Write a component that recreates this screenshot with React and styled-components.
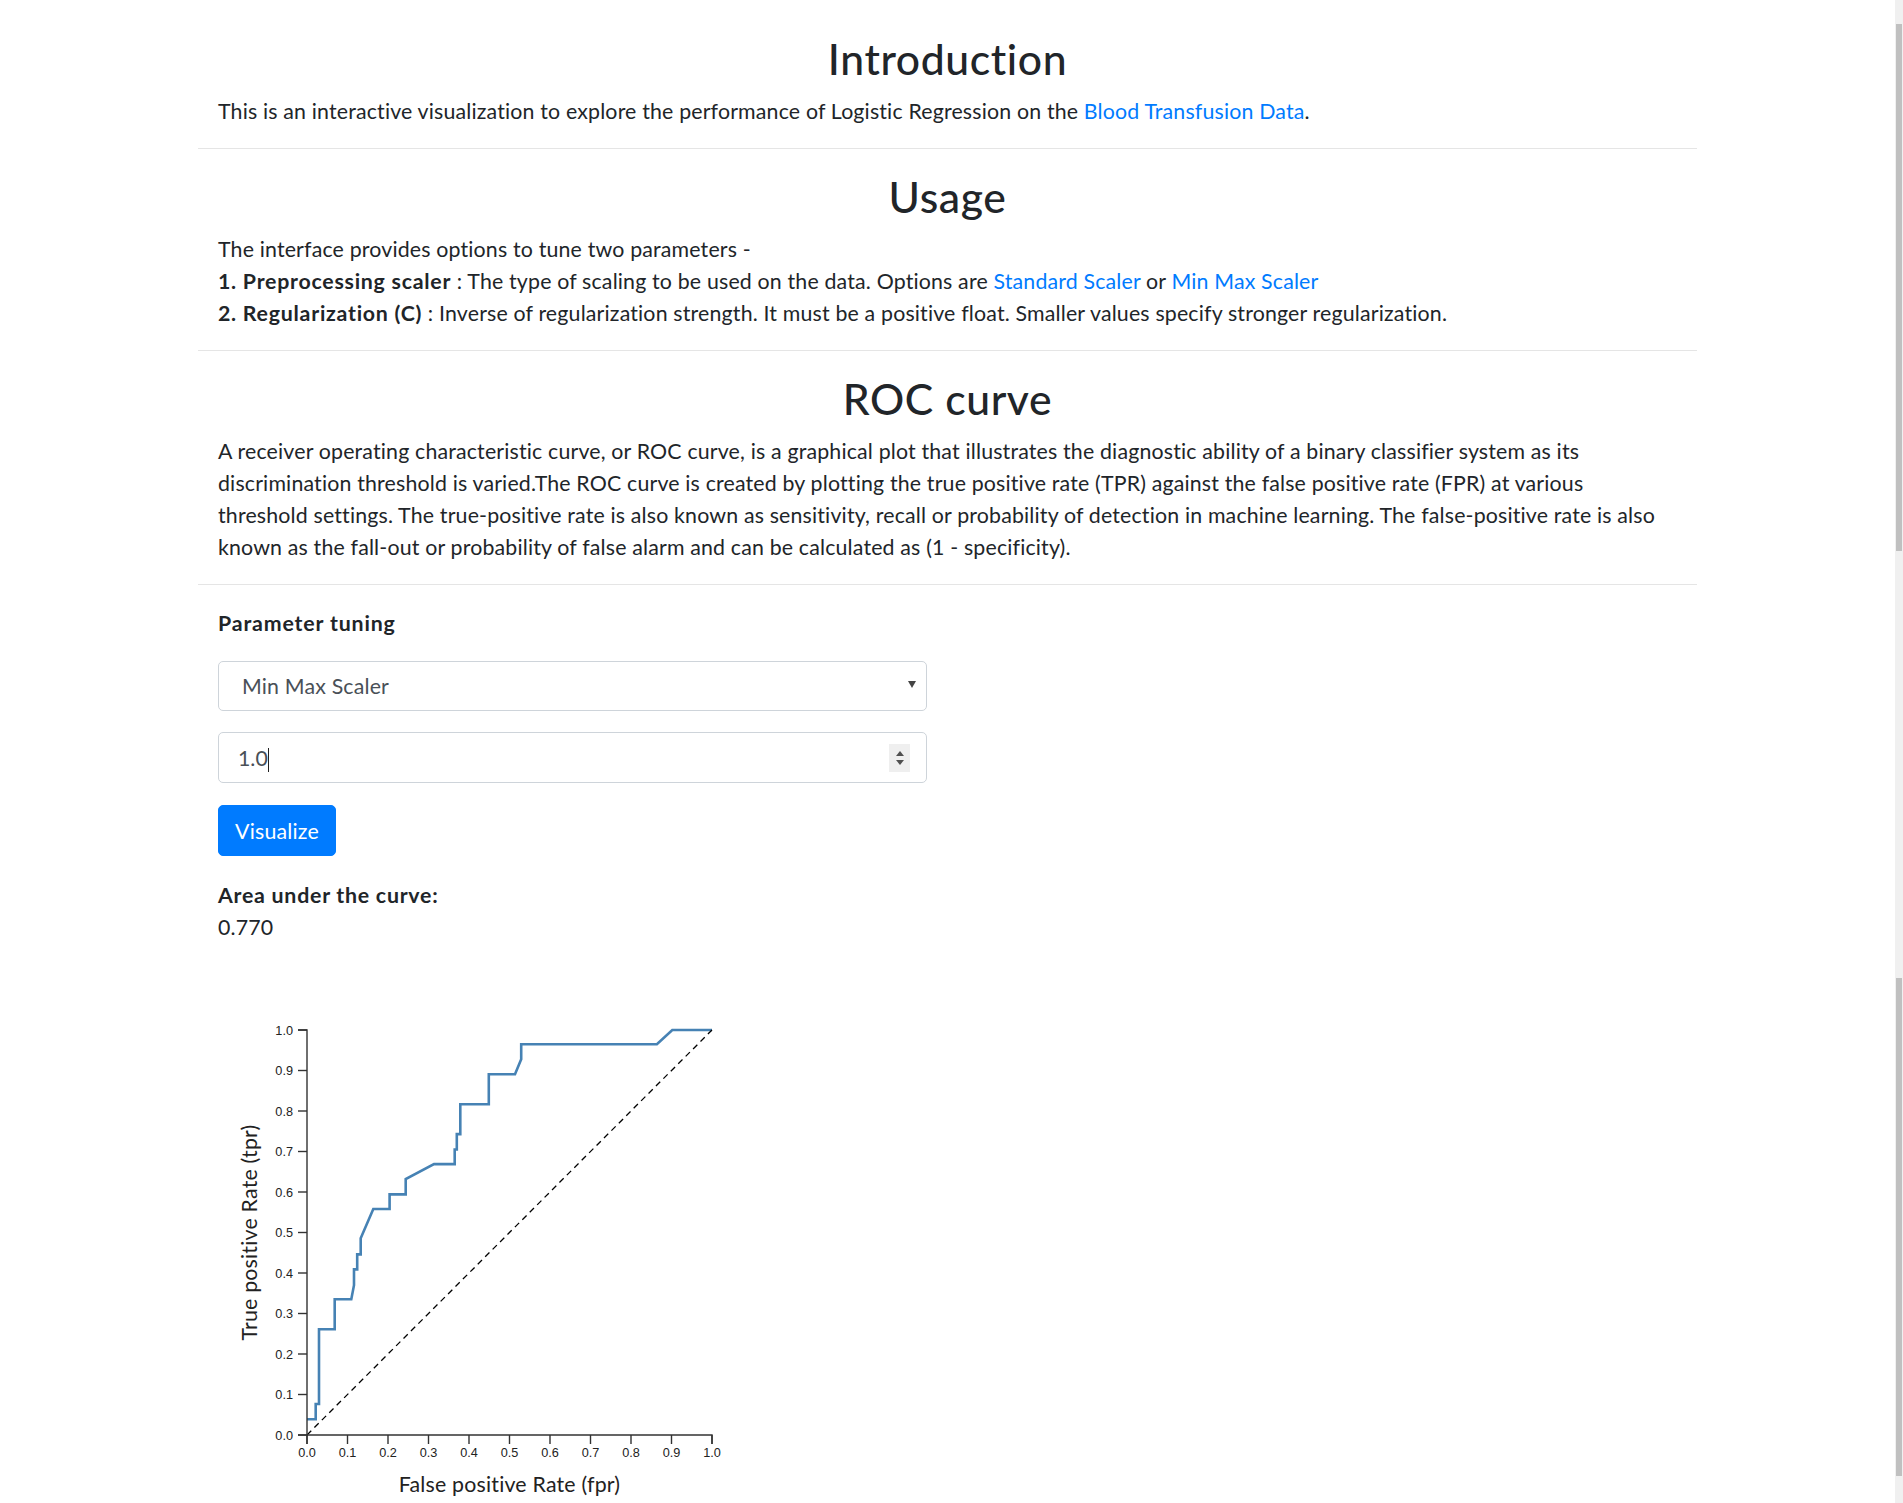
import React from "react";
import styled, { createGlobalStyle } from "styled-components";

const Global = createGlobalStyle`
  html, body { margin: 0; padding: 0; height: 100%; overflow: hidden; background: #fff; }
  body { font-family: Lato, "Open Sans", sans-serif; color: #212529; }
  #root { height: 100%; }
  * { box-sizing: border-box; }
`;

const Frame = styled.div`
  display: flex;
  height: 100vh;
`;

const Page = styled.main`
  flex: 1;
  min-width: 0;
  overflow: hidden;
`;

const Container = styled.div`
  width: 1499px;
  margin: 0 auto;
  padding-top: 33px;
`;

const Section = styled.section`
  padding: 0 20px;
`;

const Heading = styled.h2`
  margin: 0 0 10px;
  font-size: 42.67px;
  line-height: 52px;
  font-weight: 500;
  letter-spacing: 0.6px;
  text-align: center;
  color: #212529;
`;

const Text = styled.p`
  margin: 0;
  font-size: 21.33px;
  line-height: 32px;
  letter-spacing: 0.17px;
`;

const Link = styled.a`
  color: #007bff;
  text-decoration: none;
`;

const Divider = styled.hr`
  margin: 21px 0 22px;
  border: 0;
  border-top: 1px solid rgba(0, 0, 0, 0.1);
  height: 0;
`;

const Label = styled.div`
  margin-top: 1px;
  font-size: 21.33px;
  line-height: 32px;
  font-weight: 700;
  letter-spacing: 0.85px;
`;

const Form = styled.div`
  display: flex;
  flex-direction: column;
  align-items: flex-start;
  margin-top: 22px;
`;

const Field = styled.div`
  position: relative;
  width: 709px;
  height: ${(p) => p.$h}px;
  margin-bottom: ${(p) => p.$mb}px;
`;

const Select = styled.select`
  appearance: none;
  -webkit-appearance: none;
  width: 100%;
  height: 100%;
  padding: 0 40px 0 23px;
  font-family: inherit;
  font-size: 21.33px;
  letter-spacing: 0.17px;
  color: #495057;
  background: #fff;
  border: 1px solid #ced4da;
  border-radius: 5px;
  outline: none;
`;

const SelectArrow = styled.span`
  position: absolute;
  right: 11px;
  top: 20px;
  width: 0;
  height: 0;
  border-left: 4px solid transparent;
  border-right: 4px solid transparent;
  border-top: 7px solid #444;
  pointer-events: none;
`;

const NumberInput = styled.input`
  appearance: textfield;
  -moz-appearance: textfield;
  width: 100%;
  height: 100%;
  padding: 0 19px;
  font-family: inherit;
  font-size: 21.33px;
  color: #495057;
  background: #fff;
  border: 1px solid #ced4da;
  border-radius: 5px;
  outline: none;
  &::-webkit-inner-spin-button,
  &::-webkit-outer-spin-button {
    -webkit-appearance: none;
    margin: 0;
  }
`;

const Caret = styled.span`
  position: absolute;
  left: 50px;
  top: 16px;
  width: 1px;
  height: 24px;
  background: #222;
`;

const Spinner = styled.span`
  position: absolute;
  right: 17px;
  top: 12px;
  width: 21px;
  height: 28px;
  background: #efefef;
  display: flex;
  flex-direction: column;
  align-items: center;
  justify-content: center;
  gap: 4px;
`;

const Tri = styled.span`
  width: 0;
  height: 0;
  border-left: 4px solid transparent;
  border-right: 4px solid transparent;
  ${(p) => (p.$up ? "border-bottom: 5px solid #505050;" : "border-top: 5px solid #505050;")}
`;

const Button = styled.button`
  height: 51px;
  padding: 0 16px;
  font-family: inherit;
  font-size: 21.33px;
  letter-spacing: 0.2px;
  color: #fff;
  background: #007bff;
  border: 1px solid #007bff;
  border-radius: 5px;
  margin-bottom: 23px;
  cursor: pointer;
`;

const Result = styled.div`
  font-size: 21.33px;
  line-height: 32px;
  letter-spacing: 0.17px;
`;

const Bold = styled.b`
  font-weight: 700;
  letter-spacing: 0.75px;
`;

const Chart = styled.svg`
  display: block;
  margin-top: 23px;
  overflow: visible;
`;

const ScrollRail = styled.div`
  width: 8px;
  flex-shrink: 0;
  background: #f0f0f0;
  display: flex;
  flex-direction: column;
  align-items: center;
`;

const Thumb = styled.div`
  width: 6px;
  margin-top: ${(p) => p.$top}px;
  height: ${(p) => p.$h}px;
  background: #c0c0c0;
`;

const ROC = [
  [0, 0.0387], [0.0214, 0.0387], [0.0214, 0.0765], [0.0296, 0.0765], [0.0296, 0.261],
  [0.0683, 0.261], [0.0683, 0.335], [0.1095, 0.335], [0.116, 0.37], [0.116, 0.409],
  [0.124, 0.409], [0.124, 0.446], [0.1325, 0.446], [0.1325, 0.4856], [0.1638, 0.558],
  [0.204, 0.558], [0.204, 0.594], [0.2436, 0.594], [0.2436, 0.632], [0.3136, 0.669],
  [0.3646, 0.669], [0.3646, 0.705], [0.37, 0.705], [0.37, 0.743], [0.3786, 0.743],
  [0.3786, 0.8165], [0.449, 0.8165], [0.449, 0.8905], [0.5136, 0.8905], [0.529, 0.9276],
  [0.529, 0.9646], [0.864, 0.9646], [0.902, 1], [1, 1],
];

const ticks = [0, 0.1, 0.2, 0.3, 0.4, 0.5, 0.6, 0.7, 0.8, 0.9, 1.0];

function RocChart() {
  const S = 405;
  const ox = 89;
  const oy = 64;
  const d = ROC.map(([x, y], i) => `${i ? "L" : "M"}${(x * S).toFixed(1)},${((1 - y) * S).toFixed(1)}`).join("");
  const tickFont = { fontFamily: '"Liberation Sans", Arial, sans-serif', fontSize: 12.7, fill: "#222" };
  const titleFont = { fontFamily: "Lato, sans-serif", fontSize: 21.33, letterSpacing: 0.2, fill: "#222" };
  return (
    <Chart width="560" height="540" viewBox="0 0 560 540">
      <g transform={`translate(${ox},${oy})`}>
        <path d={d} fill="none" stroke="#4682b4" strokeWidth="2.6" />
        <line x1="0" y1={S} x2={S} y2="0" stroke="#000" strokeWidth="1.3" strokeDasharray="6,4.5" />
        <path d={`M-9,${S}H0V0H-9`} fill="none" stroke="#333" strokeWidth="1.4" />
        {ticks.map((t) => (
          <g key={"y" + t}>
            <line x1="-9" x2="0" y1={(1 - t) * S} y2={(1 - t) * S} stroke="#333" strokeWidth="1.4" />
            <text x="-14" y={(1 - t) * S + 4.5} textAnchor="end" style={tickFont}>{t.toFixed(1)}</text>
          </g>
        ))}
        <path d={`M0,${S + 9}V${S}H${S}V${S + 9}`} fill="none" stroke="#333" strokeWidth="1.4" />
        {ticks.map((t) => (
          <g key={"x" + t}>
            <line x1={t * S} x2={t * S} y1={S} y2={S + 9} stroke="#333" strokeWidth="1.4" />
            <text x={t * S} y={S + 21.5} textAnchor="middle" style={tickFont}>{t.toFixed(1)}</text>
          </g>
        ))}
        <text x={S / 2} y="461.6" textAnchor="middle" style={titleFont}>
          False positive Rate (fpr)
        </text>
        <text transform="rotate(-90)" x={-S / 2} y="-50" textAnchor="middle" style={titleFont}>
          True positive Rate (tpr)
        </text>
      </g>
    </Chart>
  );
}

export default function App() {
  return (
    <>
      <Global />
      <Frame>
        <Page>
          <Container>
            <Section>
              <Heading>Introduction</Heading>
              <Text>
                This is an interactive visualization to explore the performance of Logistic Regression on the{" "}
                <Link href="#">Blood Transfusion Data</Link>.
              </Text>
            </Section>
            <Divider />
            <Section>
              <Heading>Usage</Heading>
              <Text>
                The interface provides options to tune two parameters -
                <br />
                <Bold>1. Preprocessing scaler</Bold> : The type of scaling to be used on the data. Options are{" "}
                <Link href="#">Standard Scaler</Link> or <Link href="#">Min Max Scaler</Link>
                <br />
                <Bold>2. Regularization (C)</Bold> : Inverse of regularization strength. It must be a positive float. Smaller values specify stronger regularization.
              </Text>
            </Section>
            <Divider />
            <Section>
              <Heading>ROC curve</Heading>
              <Text>
                A receiver operating characteristic curve, or ROC curve, is a graphical plot that illustrates the diagnostic ability of a binary classifier system as its discrimination threshold is varied.The ROC curve is created by plotting the true positive rate (TPR) against the false positive rate (FPR) at various threshold settings. The true-positive rate is also known as sensitivity, recall or probability of detection in machine learning. The false-positive rate is also known as the fall-out or probability of false alarm and can be calculated as (1 - specificity).
              </Text>
            </Section>
            <Divider />
            <Section>
              <Label>Parameter tuning</Label>
              <Form>
                <Field $h={50} $mb={21}>
                  <Select defaultValue="minmax">
                    <option value="standard">Standard Scaler</option>
                    <option value="minmax">Min Max Scaler</option>
                  </Select>
                  <SelectArrow />
                </Field>
                <Field $h={51} $mb={22}>
                  <NumberInput type="number" step="0.1" defaultValue="1.0" />
                  <Caret />
                  <Spinner>
                    <Tri $up />
                    <Tri />
                  </Spinner>
                </Field>
                <Button>Visualize</Button>
              </Form>
              <Result>
                <Bold>Area under the curve:</Bold>
                <br />
                0.770
              </Result>
              <RocChart />
            </Section>
          </Container>
        </Page>
        <ScrollRail>
          <Thumb $top={24} $h={527} />
          <Thumb $top={427} $h={498} />
        </ScrollRail>
      </Frame>
    </>
  );
}
